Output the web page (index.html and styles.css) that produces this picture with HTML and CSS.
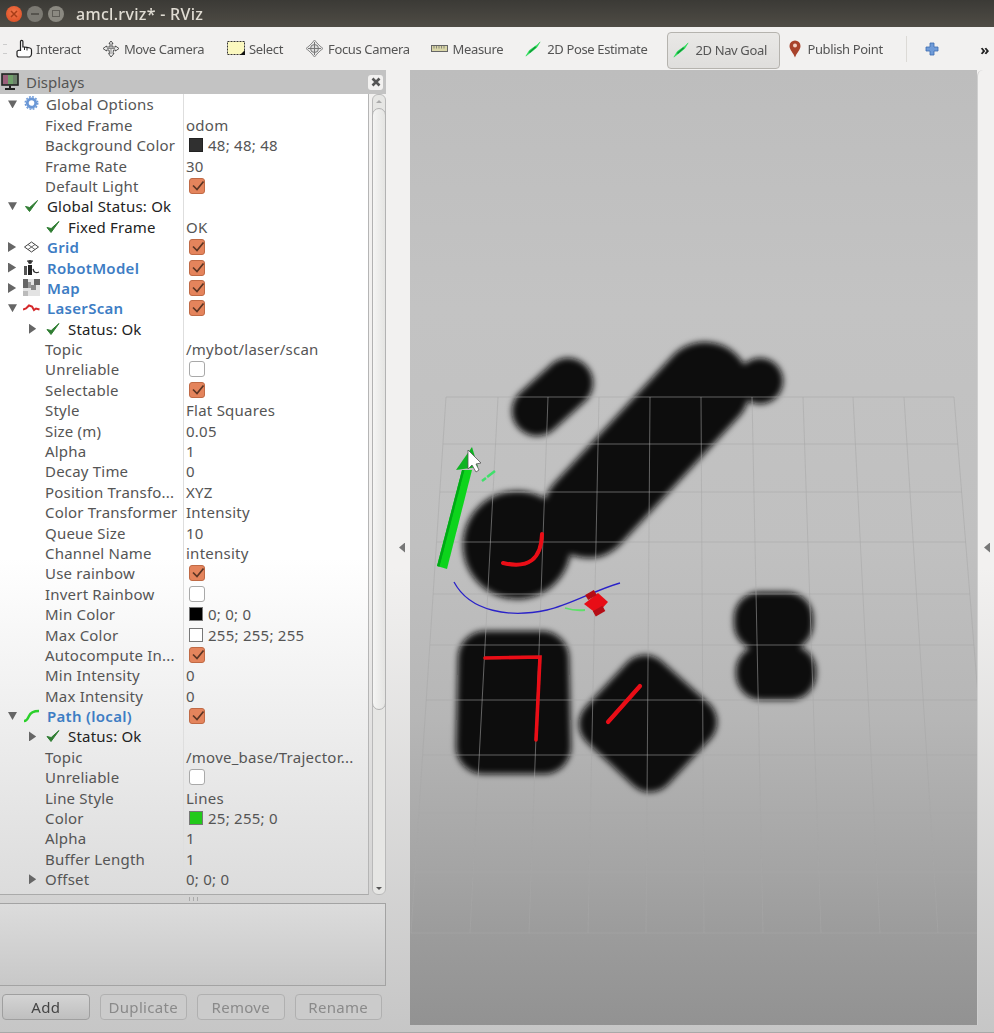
FILE: index.html
```html
<!DOCTYPE html>
<html lang="en">
<head>
<meta charset="utf-8">
<title>amcl.rviz* - RViz</title>
<link rel="stylesheet" href="styles.css">
</head>
<body>
<svg class="defs" width="0" height="0" aria-hidden="true">
  <symbol id="check" viewBox="0 0 16 16"><path d="M2 8.500 6 13.500 14 2.500 6.200 9.500z" fill="#2f7d32" stroke="#2f7d32" stroke-width="1" stroke-linejoin="round"/></symbol>
  <symbol id="tick" viewBox="0 0 15 15"><path d="M3 6.500 7 10.500 13.500 2.500" fill="none" stroke="#5b3524" stroke-width="1.700"/></symbol>
  <symbol id="arrow" viewBox="0 0 18 18"><path d="M1 17 5 10.500 13.500 4.500 17 1 13 7.500 5.500 13.500z" fill="#27dc55" stroke="#27dc55" stroke-width=".6"/><path d="M5 13 12 6.500" stroke="#0e9636" stroke-width="1.500"/></symbol>
</svg>
<header class="titlebar">
  <span class="wbtn close"><svg width="8" height="8" viewBox="0 0 8 8"><path d="M1 1 7 7M7 1 1 7" stroke="#a83d18" stroke-width="1.500"/></svg></span>
  <span class="wbtn min"><i class="dash"></i></span>
  <span class="wbtn max"><i class="square"></i></span>
  <span class="wtitle">amcl.rviz* - RViz</span>
</header>
<nav class="toolbar">
  <span class="grip"></span>
  <span class="tool t-interact"><svg width="18" height="20" viewBox="0 0 18 20"><path d="M5.500 12V2.500a1.200 1.200 0 0 1 2.400 0V8h1.300l2.600.4 3.200.6q1.500.4 1.500 2V15q0 2-2 3H4q-2 0-2-2v-3.500q0-1 3.500-1.500z" fill="#fff" stroke="#222" stroke-width="1.200"/><path d="M9.500 8v3M12 8.500v3" stroke="#222"/></svg>Interact</span>
  <span class="tool t-move"><svg width="18" height="18" viewBox="0 0 18 18"><path d="M9 1 11 3.500H10V7H13.500V6L17 8.500 13.500 11V10H11.500L11 13.500H12L9 17 6.500 13.500H7.500L7 10H4.500V11L1 8.500 4.500 6V7H8V3.500H7z" fill="#eee" stroke="#555"/><path d="M5 8.500H13M9 5V14" stroke="#888"/></svg>Move Camera</span>
  <span class="tool t-select"><svg width="18" height="15" viewBox="0 0 18 15"><rect x=".5" y=".5" width="17" height="13" fill="#fbf8bf" stroke="#333" stroke-dasharray="2 1"/><path d="M18 9v5h-5z" fill="#111"/></svg>Select</span>
  <span class="tool t-focus"><svg width="19" height="19" viewBox="0 0 19 19"><path d="M9.500 1 12 4 15 7 18 9.500 15 12 12 15 9.500 18 7 15 4 12 1 9.500 4 7 7 4z" fill="#e8e8e8" stroke="#8a8a8a"/><circle cx="9.500" cy="9.500" r="4" fill="#ddd" stroke="#777"/><path d="M9.500 3V16M3 9.500H16" stroke="#777"/></svg>Focus Camera</span>
  <span class="tool t-measure"><svg width="17" height="8" viewBox="0 0 17 8"><rect x=".5" y=".5" width="16" height="6" fill="#d9d6a8" stroke="#666"/><path d="M3 1V3.500M5.500 1V3.500M8 1V3.500M10.500 1V3.500M13 1V3.500" stroke="#666" stroke-width=".7"/></svg>Measure</span>
  <span class="tool t-pose"><svg width="16" height="16"><use href="#arrow"/></svg>2D Pose Estimate</span>
  <span class="tool t-goal"><svg width="16" height="16"><use href="#arrow"/></svg>2D Nav Goal</span>
  <span class="tool t-point"><svg width="12" height="18" viewBox="0 0 12 18"><path d="M6 17.500C4.500 13 .5 10 .5 6a5.500 5.500 0 0 1 11 0C11.500 10 7.500 13 6 17.500z" fill="#a8432c"/><circle cx="6" cy="5.500" r="2" fill="#f2d0c4"/></svg>Publish Point</span>
  <span class="tsep"></span>
  <svg class="plus" width="14" height="14" viewBox="0 0 14 14"><path d="M5 1H9V5H13V9H9V13H5V9H1V5H5z" fill="#6f9bd8" stroke="#3d6db0" stroke-width=".8"/></svg>
  <span class="more">»</span>
</nav>
<main class="workspace">
  <section class="displays">
    <div class="dock-title">
      <svg width="18" height="18" viewBox="0 0 18 18"><rect x="1" y="1" width="16" height="11" fill="#6b7f6a" stroke="#222" stroke-width="1.600"/><rect x="2" y="2" width="5" height="9" fill="#9a5f7a"/><rect x="7" y="2" width="5" height="9" fill="#6fa06a"/><path d="M9 12.500V15M4 16H14" stroke="#222" stroke-width="2"/></svg>
      <span>Displays</span>
      <span class="dock-close"><svg width="10" height="10" viewBox="0 0 10 10"><path d="M1.500 1.500 8.500 8.500M8.500 1.500 1.500 8.500" stroke="#555" stroke-width="2.600"/></svg></span>
    </div>
    <div class="tree-wrap">
      <div class="tree">
        <div class="row"><div class="name top dim"><i class="tw open"></i><svg class="ic gear" width="16" height="16" viewBox="0 0 16 16"><circle cx="8" cy="8" r="4.500" fill="none" stroke="#6a97d6" stroke-width="3"/><circle cx="8" cy="8" r="6.700" fill="none" stroke="#6a97d6" stroke-width="1.500" stroke-dasharray="2 1.500"/></svg>Global Options</div><div class="val"></div></div>
        <div class="row"><div class="name child">Fixed Frame</div><div class="val">odom</div></div>
        <div class="row"><div class="name child">Background Color</div><div class="val"><i class="swatch s-dark"></i>48; 48; 48</div></div>
        <div class="row"><div class="name child">Frame Rate</div><div class="val">30</div></div>
        <div class="row"><div class="name child">Default Light</div><div class="val"><span class="cb on"><svg width="15" height="15"><use href="#tick"/></svg></span></div></div>
        <div class="row"><div class="name top strong"><i class="tw open"></i><svg class="ic" width="16" height="16"><use href="#check"/></svg>Global Status: Ok</div><div class="val"></div></div>
        <div class="row"><div class="name status strong"><i class="tw none"></i><svg class="ok" width="16" height="16"><use href="#check"/></svg>Fixed Frame</div><div class="val">OK</div></div>
        <div class="row"><div class="name top link"><i class="tw"></i><svg class="ic" width="16" height="12" viewBox="0 0 16 12"><path d="M1 6 8 1 15 6 8 11z" fill="#fff" stroke="#444"/><path d="M4.500 3.500 11.500 8.500M11.500 3.500 4.500 8.500" stroke="#444" stroke-width=".8"/></svg>Grid</div><div class="val"><span class="cb on"><svg width="15" height="15"><use href="#tick"/></svg></span></div></div>
        <div class="row"><div class="name top link"><i class="tw"></i><svg class="ic" width="17" height="17" viewBox="0 0 17 17"><circle cx="7" cy="3" r="2" fill="#333"/><rect x="4" y="1.500" width="6" height="1.200" fill="#333"/><rect x="1" y="7" width="3" height="9" fill="#555"/><path d="M5 6H9V16H5z" fill="#222"/><path d="M10 10Q11 15 16 13" fill="none" stroke="#333" stroke-width="1.300"/></svg>RobotModel</div><div class="val"><span class="cb on"><svg width="15" height="15"><use href="#tick"/></svg></span></div></div>
        <div class="row"><div class="name top link"><i class="tw"></i><svg class="ic" width="17" height="17" viewBox="0 0 17 17"><rect width="17" height="17" fill="#e3e3e3"/><rect width="5" height="9" fill="#666"/><rect x="5" y="3" width="3" height="6" fill="#999"/><rect x="11" width="6" height="6" fill="#666"/><rect x="8" y="6" width="5" height="5" fill="#888"/><rect y="12" width="5" height="5" fill="#bbb"/></svg>Map</div><div class="val"><span class="cb on"><svg width="15" height="15"><use href="#tick"/></svg></span></div></div>
        <div class="row"><div class="name top link"><i class="tw open"></i><svg class="ic" width="17" height="10" viewBox="0 0 17 10"><path d="M0 6.500 3 5.500 6 2.500 9 3.500 11 7 13 5.500 16.500 6.500" fill="none" stroke="#d5282a" stroke-width="2"/></svg>LaserScan</div><div class="val"><span class="cb on"><svg width="15" height="15"><use href="#tick"/></svg></span></div></div>
        <div class="row"><div class="name status strong"><i class="tw"></i><svg class="ok" width="16" height="16"><use href="#check"/></svg>Status: Ok</div><div class="val"></div></div>
        <div class="row"><div class="name child">Topic</div><div class="val">/mybot/laser/scan</div></div>
        <div class="row"><div class="name child">Unreliable</div><div class="val"><span class="cb"></span></div></div>
        <div class="row"><div class="name child">Selectable</div><div class="val"><span class="cb on"><svg width="15" height="15"><use href="#tick"/></svg></span></div></div>
        <div class="row"><div class="name child">Style</div><div class="val">Flat Squares</div></div>
        <div class="row"><div class="name child">Size (m)</div><div class="val">0.05</div></div>
        <div class="row"><div class="name child">Alpha</div><div class="val">1</div></div>
        <div class="row"><div class="name child">Decay Time</div><div class="val">0</div></div>
        <div class="row"><div class="name child">Position Transfo...</div><div class="val">XYZ</div></div>
        <div class="row"><div class="name child">Color Transformer</div><div class="val">Intensity</div></div>
        <div class="row"><div class="name child">Queue Size</div><div class="val">10</div></div>
        <div class="row"><div class="name child">Channel Name</div><div class="val">intensity</div></div>
        <div class="row"><div class="name child">Use rainbow</div><div class="val"><span class="cb on"><svg width="15" height="15"><use href="#tick"/></svg></span></div></div>
        <div class="row"><div class="name child">Invert Rainbow</div><div class="val"><span class="cb"></span></div></div>
        <div class="row"><div class="name child">Min Color</div><div class="val"><i class="swatch s-black"></i>0; 0; 0</div></div>
        <div class="row"><div class="name child">Max Color</div><div class="val"><i class="swatch s-white"></i>255; 255; 255</div></div>
        <div class="row"><div class="name child">Autocompute In...</div><div class="val"><span class="cb on"><svg width="15" height="15"><use href="#tick"/></svg></span></div></div>
        <div class="row"><div class="name child">Min Intensity</div><div class="val">0</div></div>
        <div class="row"><div class="name child">Max Intensity</div><div class="val">0</div></div>
        <div class="row"><div class="name top link"><i class="tw open"></i><svg class="ic" width="17" height="14" viewBox="0 0 17 14"><path d="M1 12Q4 12 6 7T16 2" fill="none" stroke="#2bd02b" stroke-width="2.400"/></svg>Path (local)</div><div class="val"><span class="cb on"><svg width="15" height="15"><use href="#tick"/></svg></span></div></div>
        <div class="row"><div class="name status strong"><i class="tw"></i><svg class="ok" width="16" height="16"><use href="#check"/></svg>Status: Ok</div><div class="val"></div></div>
        <div class="row"><div class="name child">Topic</div><div class="val">/move_base/Trajector...</div></div>
        <div class="row"><div class="name child">Unreliable</div><div class="val"><span class="cb"></span></div></div>
        <div class="row"><div class="name child">Line Style</div><div class="val">Lines</div></div>
        <div class="row"><div class="name child">Color</div><div class="val"><i class="swatch s-green"></i>25; 255; 0</div></div>
        <div class="row"><div class="name child">Alpha</div><div class="val">1</div></div>
        <div class="row"><div class="name child">Buffer Length</div><div class="val">1</div></div>
        <div class="row"><div class="name child sub"><i class="tw"></i>Offset</div><div class="val">0; 0; 0</div></div>
        <div class="row row-fill"><div class="name"></div></div>
      </div>
      <div class="scrollbar">
        <span class="sb-btn sb-up"></span>
        <span class="sb-thumb"></span>
        <span class="sb-btn sb-down"></span>
      </div>
    </div>
    <div class="hsplit"><i></i></div>
    <div class="desc"></div>
    <div class="actions">
      <button class="btn" type="button">Add</button>
      <button class="btn off" type="button">Duplicate</button>
      <button class="btn off" type="button">Remove</button>
      <button class="btn off" type="button">Rename</button>
    </div>
  </section>
  <div class="vsplit"><i class="lt"></i></div>
  <svg class="view" viewBox="410 70 567 955" preserveAspectRatio="none" role="img" aria-label="3D view">
    <defs>
      <linearGradient id="bg" x1="0" y1="0" x2="0" y2="1">
        <stop offset="0" stop-color="#bdbdbd"/><stop offset=".25" stop-color="#c3c3c3"/><stop offset=".5" stop-color="#c0c0c0"/><stop offset=".68" stop-color="#b6b6b6"/><stop offset=".84" stop-color="#a4a4a4"/><stop offset=".9" stop-color="#9c9c9c"/><stop offset="1" stop-color="#929292"/>
      </linearGradient>
      <filter id="soft" x="-10%" y="-10%" width="120%" height="120%"><feGaussianBlur stdDeviation="3"/></filter>
      <filter id="tiny"><feGaussianBlur stdDeviation=".5"/></filter>
    </defs>
    <rect x="410" y="70" width="567" height="955" fill="url(#bg)"/>
    <g class="map" filter="url(#soft)" fill="#111" stroke="#111">
      <path d="M537 411 568 383" stroke-width="50" stroke-linecap="round"/>
      <path d="M588 513 705 387" stroke-width="90" stroke-linecap="round"/>
      <circle cx="760" cy="381" r="23" stroke="none"/>
      <circle cx="517" cy="545" r="54" stroke="none"/>
      <polygon points="485,658 542,658 544,747 483,747" stroke-width="54" stroke-linejoin="round"/>
      <polygon points="645,680 692,722 650,767 604,724" stroke-width="50" stroke-linejoin="round"/>
      <rect x="734" y="592" width="79" height="58" rx="26" stroke="none"/>
      <rect x="736" y="645" width="80" height="55" rx="26" stroke="none"/>
    </g>
    <g class="grid" stroke="#a8a8a8" stroke-opacity=".55" stroke-width="1" fill="none">
      <path d="M446 397H954M443 444H958M440 492H962M437 542H966M433 594H970M430 645H974M426 700H978M423 755H983M419 813H987M415 872H992M411 933H997"/>
      <path d="M446 397 411 933M498 397 470 933M548 397 529 933M599 397 588 933M650 397 646 933M701 397 704 933M752 397 763 933M803 397 821 933M853 397 880 933M904 397 938 933M954 397 997 933"/>
    </g>
    <g class="scan" fill="none" stroke="#ea0f18" stroke-linecap="round" filter="url(#tiny)">
      <path d="M542 534Q541 572 503 563" stroke-width="4"/>
      <path d="M485 658 540 657 536 740" stroke-width="3.600"/>
      <path d="M640 686 608 722" stroke-width="4.200"/>
    </g>
    <g class="path" fill="none">
      <path d="M565 608Q575 611 585 610" stroke="#5fe06a" stroke-width="1.800"/>
      <path d="M454 582C470 612 510 618 547 610 570 605 595 590 620 583" stroke="#2a22c8" stroke-width="1.300"/>
      <path d="M482 481 495 471" stroke="#3fe06a" stroke-width="2.500" stroke-dasharray="5 1.500 7 0"/>
    </g>
    <g class="robot" filter="url(#tiny)">
      <polygon points="584,604 598,593 608,602 597,614" fill="#e80f14"/>
      <rect x="586" y="592" width="10" height="6" fill="#b50f14" transform="rotate(-30 591 595)"/>
      <rect x="593" y="608" width="11" height="6" fill="#b50f14" transform="rotate(-30 599 610)"/>
    </g>
    <g class="goal" filter="url(#tiny)">
      <polygon points="437,566 447,569 472,470 462,470" fill="#0cd41c"/>
      <polygon points="437,566 439.500,566.800 464.500,470 462,470" fill="#00a814"/>
      <polygon points="456,470 478,467 472,447" fill="#0cb320"/>
    </g>
    <path class="cursor" d="M468 450V469L472 465 476 472 479 470 476 464 481 463z" fill="#fff" stroke="#555" stroke-width=".8"/>
  </svg>
  <div class="vsplit right"><i class="lt"></i></div>
</main>
<footer class="statusbar"></footer>
</body>
</html>
```
FILE: styles.css
```css
* { box-sizing: border-box; }
html, body { margin: 0; padding: 0; }
body {
  width: 994px;
  height: 1033px;
  overflow: hidden;
  display: flex;
  flex-direction: column;
  font-family: "Noto Sans", "Open Sans", sans-serif;
  font-size: 15px;
  letter-spacing: .2px;
  color: #555;
  background: linear-gradient(#f2f1f0 0, #f2f1f0 55%, #c6c6c6 100%);
}
.defs { position: absolute; }
.titlebar, .toolbar, .displays { filter: blur(.3px); }

.titlebar {
  height: 27px;
  flex: none;
  display: flex;
  align-items: center;
  padding-left: 6px;
  gap: 5px;
  background: linear-gradient(#3b3a36, #4f4c45);
}
.wbtn { width: 16px; height: 16px; border-radius: 50%; display: flex; align-items: center; justify-content: center; }
.close { background: radial-gradient(circle at 50% 40%, #f2764a, #d9491f); }
.min { background: #7c7a73; }
.max { background: #8b8981; }
.dash { width: 8px; height: 2px; background: #56544e; }
.square { width: 8px; height: 7px; border: 1px solid #5f5d57; }
.wtitle { margin-left: 7px; color: #e0dcd3; font-size: 16px; font-weight: 500; letter-spacing: .3px; }

.toolbar {
  height: 43px;
  flex: none;
  display: flex;
  align-items: center;
  background: #f2f1f0;
  font-size: 13px;
  letter-spacing: -.36px;
  color: #555;
}
.grip { width: 4px; height: 10px; margin-left: 3px; border-top: 1px solid #ccc; border-bottom: 1px solid #ccc; }
.tool { display: flex; align-items: center; gap: 4px; white-space: nowrap; }
.t-interact { margin-left: 8px; gap: 3px; }
.t-move { margin-left: 21px; }
.t-select { margin-left: 23px; }
.t-focus { margin-left: 22px; }
.t-measure { margin-left: 21px; gap: 5px; }
.t-pose { margin-left: 22px; gap: 6px; }
.t-goal {
  margin-left: 20px;
  height: 37px;
  width: 113px;
  padding-left: 5px;
  gap: 6px;
  margin-top: 3px;
  border: 1px solid #b5b3ae;
  border-radius: 4px;
  background: linear-gradient(#e9e8e6, #dfdedc);
}
.t-point { margin-left: 9px; gap: 6px; }
.tsep { width: 1px; height: 26px; margin-left: 23px; background: #dcdad6; }
.plus { margin-left: 18.5px; }
.more { margin-left: 41px; font-weight: 700; color: #222; font-size: 15px; }

.workspace { flex: 1; min-height: 0; display: flex; }
.displays { width: 386px; flex: none; display: flex; flex-direction: column; }
.dock-title {
  height: 24.2px;
  flex: none;
  display: flex;
  align-items: center;
  gap: 7px;
  padding-left: 1px;
  background: #c3c3c3;
  font-size: 15px;
  letter-spacing: 0;
  line-height: 22px;
}
.dock-title span:nth-child(2) { flex: 1; }
.dock-close {
  width: 15px;
  height: 15px;
  margin-right: 3px;
  display: flex;
  align-items: center;
  justify-content: center;
  background: #f2f1f0;
  border-radius: 3px;
}

.tree-wrap { height: 800.8px; flex: none; display: flex; }
.tree {
  width: 369px;
  flex: none;
  overflow: hidden;
  background: linear-gradient(#fff 0, #fff 58%, #dcdcdc 100%);
  border-bottom: 1px solid #aaa;
  border-right: 1px solid #b5b5b5;
}
.row { height: 20.4px; display: flex; }
.name {
  width: 184px;
  flex: none;
  display: flex;
  align-items: center;
  white-space: nowrap;
  border-right: 1px solid #dedede;
}
.val { display: flex; align-items: center; padding-left: 2px; white-space: nowrap; letter-spacing: .25px; }
.top { padding-left: 8px; }
.top .tw { margin-right: 6px; }
.ic { width: 17px; flex: none; margin-right: 7px; }
.gear { width: 15px; margin: 0 7px 2px 1px; }
.child { padding-left: 45px; }
.child.sub { padding-left: 29px; }
.child.sub .tw { margin-right: 8px; }
.status { padding-left: 29px; }
.status .tw { margin-right: 8px; }
.ok { margin-right: 7px; flex: none; }
.strong { color: #222; }
.dim { color: #555; }
.link { color: #3d7dc4; font-weight: 600; letter-spacing: .3px; }
.tw {
  width: 9px;
  height: 10px;
  flex: none;
  background: #666;
  clip-path: polygon(0 0, 90% 50%, 0 100%);
}
.tw.open { height: 8px; clip-path: polygon(0 0, 100% 0, 50% 100%); }
.tw.none { background: none; }
.status .tw, .child.sub .tw { width: 8px; }

.swatch { width: 14px; height: 14px; margin: 0 5px 0 3px; border: 1px solid #777; }
.s-dark { background: #303030; border-color: #222; }
.s-black { background: #000; }
.s-white { background: #fff; }
.s-green { background: #22c91a; }
.cb {
  width: 16px;
  height: 16px;
  margin-left: 3px;
  border: 1px solid #a9a9a9;
  border-radius: 3px;
  background: #fff;
  display: block;
}
.cb.on { background: #e4845c; border-color: #c06a45; }
.cb svg { display: block; }

.scrollbar {
  width: 14px;
  margin-left: 3px;
  display: flex;
  flex-direction: column;
  border: 1px solid #b9b9b9;
  border-radius: 6px;
  background: #e6e6e4;
}
.sb-btn { height: 13px; flex: none; position: relative; }
.sb-btn::after { content: ""; position: absolute; left: 3px; top: 5px; border: 3px solid transparent; }
.sb-up::after { border-bottom-color: #aaa; top: 2px; }
.sb-down::after { border-top-color: #555; top: 6px; }
.sb-thumb {
  height: 602px;
  margin: 0 -1px auto;
  border: 1px solid #b2b2b2;
  border-radius: 7px;
  background: linear-gradient(90deg, #f5f5f4, #e4e4e2);
}

.hsplit { height: 8px; flex: none; display: flex; justify-content: center; align-items: center; }
.hsplit i { width: 9px; height: 4px; border-left: 1px solid #aaa; border-right: 1px solid #aaa; background: linear-gradient(90deg, transparent 40%, #aaa 40%, #aaa 60%, transparent 60%); }
.desc {
  height: 83px;
  flex: none;
  border: 1px solid #a3a3a3;
  border-left: 0;
  background: linear-gradient(#dcdcdc, #c8c8c8);
}
.actions { display: flex; gap: 10px; padding: 8px 4px 0 2px; }
.btn {
  width: 88px;
  height: 26px;
  padding: 0;
  font: inherit;
  font-size: 15px;
  letter-spacing: .3px;
  color: #444;
  border: 1px solid #9f9f9f;
  border-radius: 4px;
  background: linear-gradient(#d4d4d4, #bfbfbf);
}
.btn.off { color: #8a8a8a; border-color: #b0b0b0; background: #cbcbcb; }

.vsplit { width: 24px; flex: none; display: flex; align-items: center; justify-content: flex-end; padding-right: 5px; }
.vsplit.right { width: 17px; border-left: 1px solid #cfcfcf; border-radius: 6px 0 0 0; padding-right: 4px; }
.lt { width: 6px; height: 10px; background: #777; clip-path: polygon(100% 0, 100% 100%, 0 50%); }
.view { width: 567px; height: 100%; flex: none; display: block; }
.statusbar { height: 8px; flex: none; border-bottom: 1px solid #a8a8a8; }
```
